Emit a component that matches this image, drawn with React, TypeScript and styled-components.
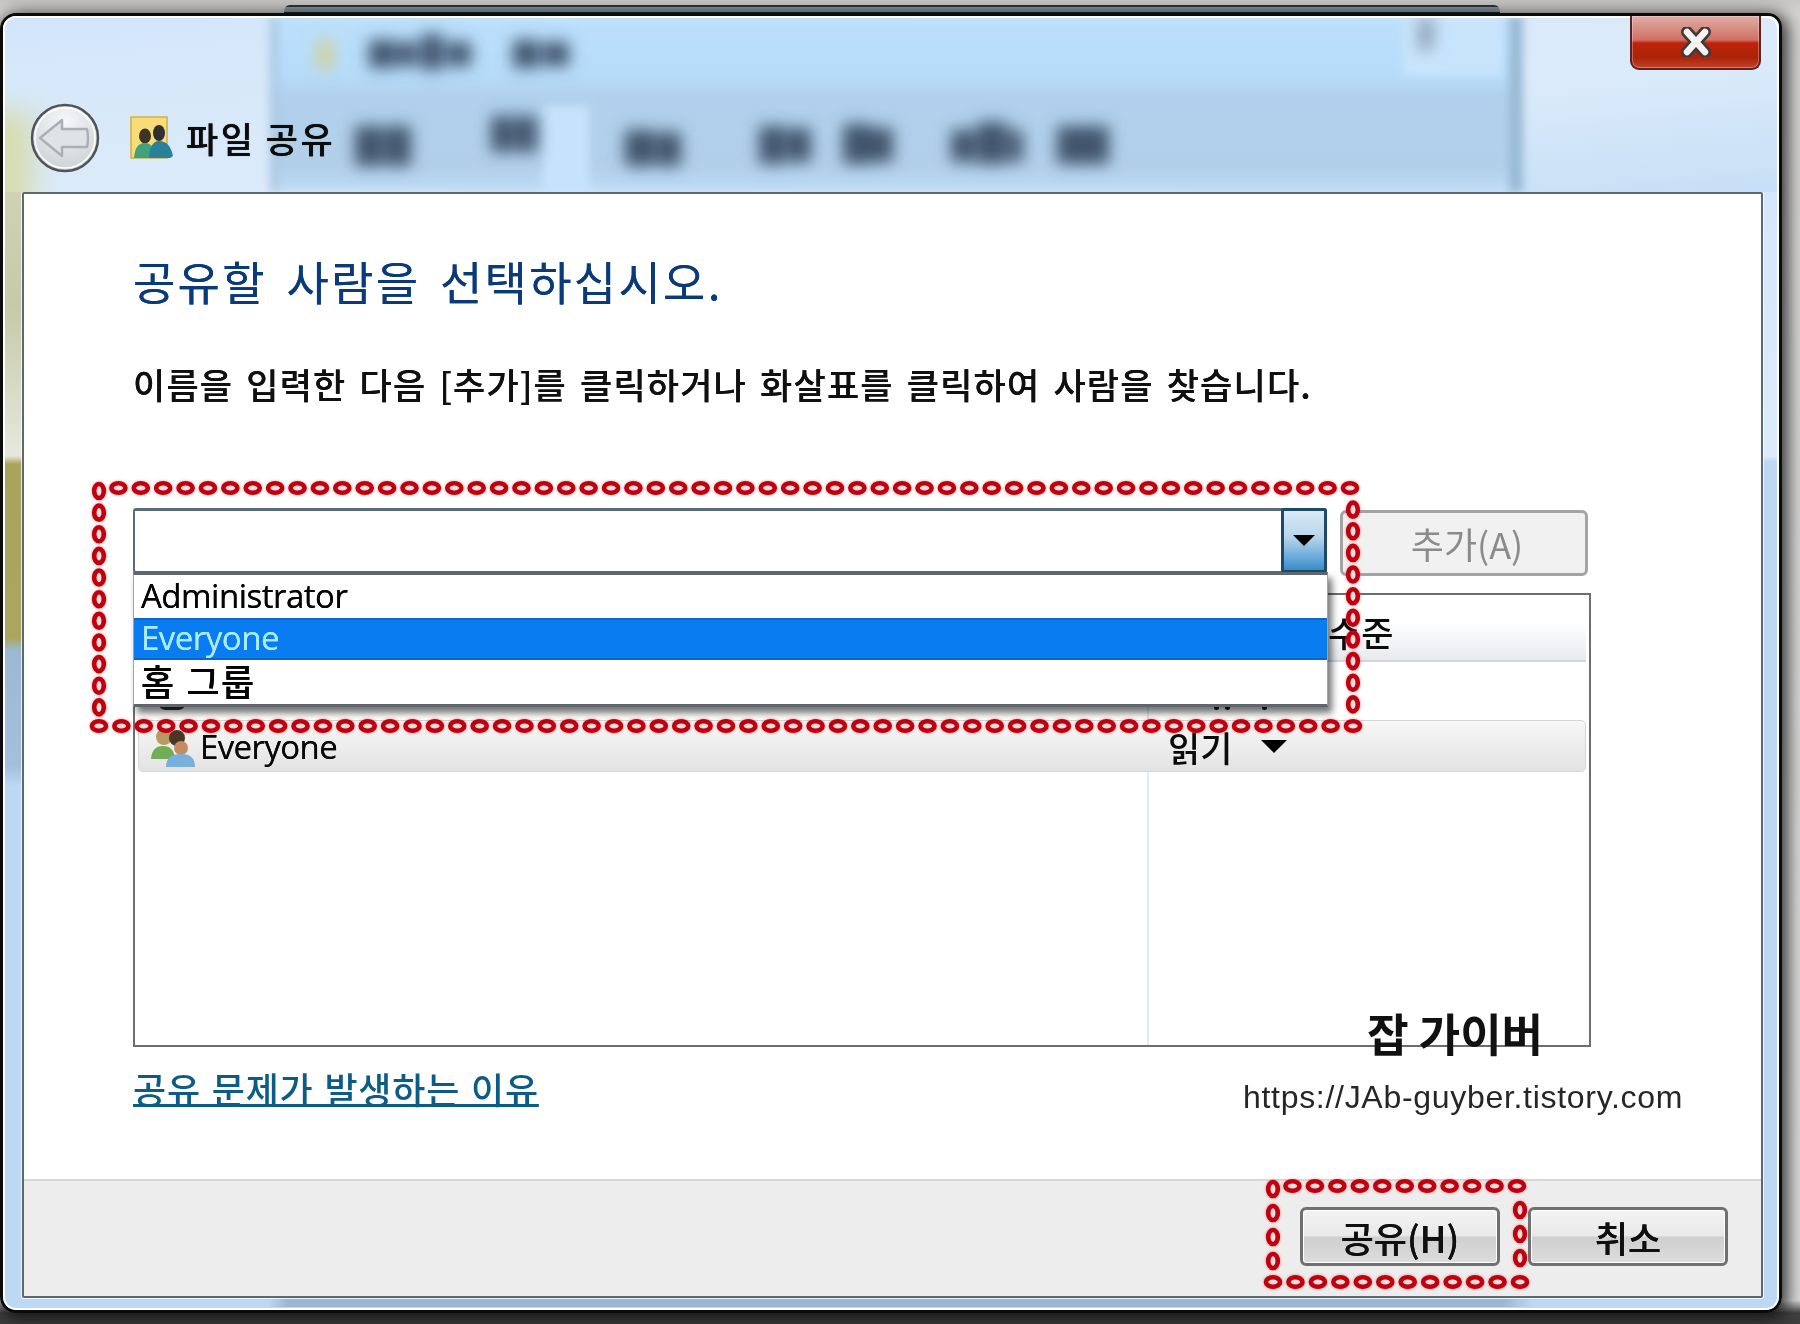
import React from "react";
import styled, { createGlobalStyle } from "styled-components";

const GlobalStyle = createGlobalStyle`
    html, body {
        margin: 0;
        padding: 0;
        background: #e4e3e2;
    }
    body {
        font-family: "Noto Sans CJK KR", "Noto Sans", sans-serif;
    }
`;

const LATIN = `"Open Sans", "Noto Sans CJK KR", sans-serif`;

// smudges of the text in the window behind the frosted glass: x, y, width, height
const backdropText: number[][] = [
    [366, 24, 26, 28], [394, 26, 20, 24], [418, 18, 22, 36], [444, 26, 24, 24],
    [510, 24, 26, 28], [540, 26, 26, 24],
    [352, 110, 28, 40], [382, 110, 26, 40],
    [488, 100, 22, 36], [512, 100, 22, 36],
    [622, 114, 30, 36], [654, 116, 24, 34],
    [756, 110, 26, 38], [784, 112, 24, 34], [840, 108, 28, 40], [868, 112, 22, 34],
    [948, 114, 24, 32], [974, 106, 30, 42], [1006, 114, 14, 32], [1054, 110, 28, 38], [1082, 110, 24, 38],
];

type FrameBox = { x: number; y: number; w: number; h: number };

// the hand-drawn red beads round the two highlighted areas
const BeadFrame: React.FC<FrameBox> = ({ x, y, w, h }) => {
    const across = Math.round(w / 22.4);
    const down = Math.round(h / 22.4);
    const stepX = w / across;
    const stepY = h / down;
    return (
        <g>
            {Array.from({ length: across + 1 }, (_, i) => (
                <React.Fragment key={i}>
                    {i > 0 && <Bead cx={x + i * stepX - 3} cy={y} rx={7} ry={4.8} />}
                    <Bead cx={x + i * stepX} cy={y + h} rx={7} ry={4.8} />
                </React.Fragment>
            ))}
            {Array.from({ length: down }, (_, i) => (
                <React.Fragment key={i}>
                    <Bead cx={x} cy={y + i * stepY + 3} rx={4.8} ry={7} />
                    {i > 0 && <Bead cx={x + w} cy={y + i * stepY} rx={4.8} ry={7} />}
                </React.Fragment>
            ))}
        </g>
    );
};

const Bead = styled.ellipse`
    fill: #f4dcdc;
    stroke: #bf000e;
    stroke-width: 4.6;
`;

const App: React.FC = () => {
    return (
        <>
            <GlobalStyle />
            <Stage>
                <Window>
                    <TitleBar>
                        <Glass width="1776" height="176" viewBox="0 0 1776 176">
                            <defs>
                                <filter id="soft" x="-50%" y="-50%" width="200%" height="200%">
                                    <feGaussianBlur stdDeviation="8" />
                                </filter>
                                <filter id="softer" x="-20%" y="-50%" width="140%" height="200%">
                                    <feGaussianBlur stdDeviation="4" />
                                </filter>
                                <filter id="softest" x="-100%" y="-50%" width="300%" height="200%">
                                    <feGaussianBlur stdDeviation="14" />
                                </filter>
                                <linearGradient id="behind" x1="0" y1="0" x2="0" y2="1">
                                    <stop offset="0" stopColor="#bce0fc" />
                                    <stop offset="0.34" stopColor="#b6dcfa" />
                                    <stop offset="0.46" stopColor="#b0d0ec" />
                                    <stop offset="0.85" stopColor="#b2cfea" />
                                    <stop offset="1" stopColor="#bfdcf6" />
                                </linearGradient>
                                <linearGradient id="glassLeft" x1="0" y1="0" x2="1" y2="1">
                                    <stop offset="0" stopColor="#d3e6f9" />
                                    <stop offset="0.6" stopColor="#dcebfa" />
                                    <stop offset="1" stopColor="#c6dff6" />
                                </linearGradient>
                            </defs>
                            <rect width="1776" height="176" fill="url(#glassLeft)" />
                            <rect x="-20" y="95" width="50" height="110" fill="#d7dcb0" filter="url(#softest)" />
                            <g filter="url(#softer)">
                                <rect x="271" y="0" width="1247" height="176" fill="url(#behind)" />
                                <rect x="266" y="0" width="10" height="176" fill="#a5c3df" opacity="0.7" />
                                <rect x="1506" y="0" width="14" height="176" fill="#98b9d4" />
                                <rect x="1400" y="0" width="100" height="60" fill="#c8e4fb" />
                                <rect x="540" y="90" width="46" height="90" fill="#c7e2fb" />
                            </g>
                            <g filter="url(#soft)">
                                <rect x="316" y="24" width="12" height="30" fill="#d8cc78" />
                                <rect x="1416" y="2" width="14" height="32" fill="#8a9db2" />
                                {backdropText.map(([x, y, w, h]) => (
                                    <rect key={`${x}-${y}`} x={x} y={y} width={w} height={h} fill="#41556c" />
                                ))}
                            </g>
                        </Glass>

                        <CloseButton aria-label="닫기">
                            <svg width="32" height="30" viewBox="0 0 32 30">
                                <path d="M7 5 L25 25 M25 5 L7 25" stroke="#403a3a" strokeWidth="12" strokeLinecap="round" />
                                <path d="M7 5 L25 25 M25 5 L7 25" stroke="#f6f2f2" strokeWidth="6.5" strokeLinecap="round" />
                            </svg>
                        </CloseButton>

                        <NavRow>
                            <BackButton width="72" height="72" viewBox="0 0 72 72">
                                <defs>
                                    <radialGradient id="backFill" cx="0.5" cy="0.25" r="0.85">
                                        <stop offset="0" stopColor="#f6f8fa" />
                                        <stop offset="1" stopColor="#c6ccd2" />
                                    </radialGradient>
                                </defs>
                                <circle cx="36" cy="36" r="33" fill="url(#backFill)" stroke="#4e5458" strokeWidth="2.5" />
                                <circle cx="36" cy="36" r="30" fill="none" stroke="#ffffff" strokeWidth="1.5" />
                                <path
                                    d="M11 36 L33 18 L33 27 L58 27 Q60 36 58 45 L33 45 L33 54 Z"
                                    fill="#dfe3e7"
                                    stroke="#aab0b6"
                                    strokeWidth="2.5"
                                    strokeLinejoin="round"
                                />
                            </BackButton>
                            <ShareIcon width="44" height="44" viewBox="0 0 44 44">
                                <rect x="1" y="1" width="36" height="41" fill="#f8dc78" stroke="#cdb04a" strokeWidth="1.5" />
                                <ellipse cx="15" cy="20" rx="6" ry="7.5" fill="#3d3526" />
                                <path d="M4 42 Q5 27 15 27 Q24 27 26 42 Z" fill="#3fa27c" />
                                <ellipse cx="29" cy="17" rx="6" ry="8" fill="#2f3030" />
                                <path d="M19 42 Q20 25 29 25 Q40 25 43 40 L40 42 Z" fill="#2a8098" />
                            </ShareIcon>
                            <WindowTitle>파일 공유</WindowTitle>
                        </NavRow>
                    </TitleBar>

                    <Pane>
                        <Body>
                            <Heading>공유할 사람을 선택하십시오.</Heading>
                            <Description>
                                이름을 입력한 다음 [추가]를 클릭하거나 화살표를 클릭하여 사람을 찾습니다.
                            </Description>

                            <PickerRow>
                                <Combo>
                                    <ComboField />
                                    <ComboArrow>
                                        <ArrowDown $size={11} />
                                    </ComboArrow>
                                    <DropList>
                                        <DropItem>Administrator</DropItem>
                                        <DropItem $selected>Everyone</DropItem>
                                        <DropItem $korean>홈 그룹</DropItem>
                                    </DropList>
                                </Combo>
                                <AddButton>추가(A)</AddButton>
                            </PickerRow>

                            <PeopleList>
                                <ListHeader>수준</ListHeader>
                                <CoveredRow>
                                    <CoveredIcon />
                                    <CoveredDots>
                                        <i />
                                        <i />
                                        <i />
                                    </CoveredDots>
                                </CoveredRow>
                                <PersonRow>
                                    <PersonName>
                                        <svg width="46" height="40" viewBox="0 0 46 40">
                                            <circle cx="14" cy="10" r="8" fill="#b99a62" />
                                            <circle cx="27" cy="11" r="8" fill="#4a3626" />
                                            <path d="M1 32 Q2 19 13 19 Q24 19 25 32 Z" fill="#72ad55" />
                                            <circle cx="31" cy="21" r="7" fill="#c48c60" />
                                            <path d="M16 40 Q16 27 31 27 Q45 27 45 40 Z" fill="#79afdc" />
                                        </svg>
                                        Everyone
                                    </PersonName>
                                    <PersonLevel>
                                        읽기
                                        <ArrowDown $size={13} />
                                    </PersonLevel>
                                </PersonRow>
                            </PeopleList>

                            <HelpLink>공유 문제가 발생하는 이유</HelpLink>

                            <Watermark>
                                <strong>잡 가이버</strong>
                                <span>https://JAb-guyber.tistory.com</span>
                            </Watermark>
                        </Body>

                        <Footer>
                            <FooterButton>공유(H)</FooterButton>
                            <FooterButton>취소</FooterButton>
                        </Footer>
                    </Pane>
                </Window>

                <Annotations width="1800" height="1324" viewBox="0 0 1800 1324">
                    <BeadFrame x={99} y={488} w={1254} h={238} />
                    <BeadFrame x={1273} y={1186} w={247} h={96} />
                </Annotations>
            </Stage>
        </>
    );
};

export default App;

const Stage = styled.div`
    position: relative;
    width: 1800px;
    height: 1324px;
    overflow: hidden;
    padding-top: 13px;
    box-sizing: border-box;
    background: linear-gradient(to bottom, #c9c7c5 0, #d6d5d4 13px, #dcdcdc 1300px, #3f3f3f 1313px);
    filter: blur(0.7px);

    /* the window behind this one pokes out above the frame */
    &::before {
        content: "";
        position: absolute;
        left: 284px;
        top: 5px;
        width: 1216px;
        height: 8px;
        background: linear-gradient(to bottom, #2e3438 0 2px, #8b9aa3 2px 7px, #20272b 7px);
        border-radius: 6px 6px 0 0;
    }
`;

const Window = styled.div`
    position: relative;
    box-sizing: border-box;
    width: 1782px;
    height: 1300px;
    border: 3px solid #0b0b0b;
    border-radius: 16px 14px 16px 16px;
    overflow: hidden;
    display: flex;
    flex-direction: column;
    padding: 0 16px 12px 19px;
    box-shadow: 3px 3px 17px 2px rgba(10, 10, 10, 0.85);
    background:
        linear-gradient(
                to bottom,
                #cfd3b4 176px,
                #c6caa8 290px,
                #e6e8dc 440px,
                #a8a45c 448px,
                #aaa660 622px,
                #9db8d2 634px,
                #a3bfdc 750px,
                #bcd8f3 770px
            )
            no-repeat left 0 top 0 / 22px 100%,
        linear-gradient(to right, transparent 265px, #9bb7d3 285px, #9bb7d3 1500px, transparent 1530px)
            no-repeat left 0 bottom 3px / 100% 9px,
        linear-gradient(to bottom, #cfe4fa 0, #dcebf9 440px, #bcd8f3 446px, #bcd8f3 100%);

    &::after {
        content: "";
        position: absolute;
        inset: 0;
        border: 2px solid #ffffff;
        border-radius: 13px;
        pointer-events: none;
    }
`;

const TitleBar = styled.div`
    position: relative;
    height: 176px;
    flex: none;
    margin: 0 -16px 0 -19px;
    padding: 86px 0 0 26px;
    box-sizing: border-box;
`;

const Glass = styled.svg`
    position: absolute;
    left: 0;
    top: 0;
`;

const CloseButton = styled.button`
    position: absolute;
    top: 0;
    right: 18px;
    width: 131px;
    height: 54px;
    padding: 0;
    z-index: 3;
    display: flex;
    align-items: center;
    justify-content: center;
    border: 2px solid #5b2420;
    border-top: 0;
    border-radius: 0 0 9px 9px;
    background: linear-gradient(to bottom, #e0aea6 0, #d07064 46%, #c0220a 52%, #aa2408 80%, #c4412a 100%);
    box-shadow: inset 0 0 0 1px rgba(255, 255, 255, 0.3);
`;

const NavRow = styled.div`
    position: relative;
    display: flex;
    align-items: center;
`;

const BackButton = styled.svg`
    flex: none;
`;

const ShareIcon = styled.svg`
    flex: none;
    margin-left: 29px;
`;

const WindowTitle = styled.div`
    margin-left: 12px;
    font-size: 35px;
    font-weight: 500;
    line-height: 44px;
    letter-spacing: 2.5px;
    color: #0c0c0c;
    text-shadow: 0 0 0.7px #0c0c0c;
`;

const Pane = styled.div`
    flex: 1;
    min-height: 0;
    display: flex;
    flex-direction: column;
    background: #ffffff;
    border: 2px solid #5e6872;
    border-radius: 2px;
    box-shadow: 0 0 0 1px rgba(255, 255, 255, 0.75);
`;

const Body = styled.div`
    position: relative;
    flex: 1;
    min-height: 0;
    box-sizing: border-box;
    padding: 56px 0 0 109px;
`;

const Heading = styled.h1`
    margin: 0;
    font-size: 46px;
    font-weight: 400;
    line-height: 60px;
    letter-spacing: 2.3px;
    word-spacing: 7px;
    color: #0a3a7a;
    text-shadow: 0 0 0.5px #0a3a7a;
`;

const Description = styled.p`
    margin: 49px 0 0;
    font-size: 35px;
    font-weight: 500;
    line-height: 50px;
    letter-spacing: 1.2px;
    word-spacing: 4px;
    color: #101010;
    text-shadow: 0 0 0.5px #101010;
`;

const PickerRow = styled.div`
    display: flex;
    gap: 13px;
    margin-top: 99px;
    height: 68px;
`;

const Combo = styled.div`
    position: relative;
    display: flex;
    width: 1194px;
    height: 65px;
    box-sizing: border-box;
    border: 2px solid #5a6c76;
    border-top-width: 3px;
    border-radius: 3px;
    background: #ffffff;
    z-index: 2;
`;

const ComboField = styled.div`
    flex: 1;
`;

const ComboArrow = styled.div`
    flex: none;
    width: 46px;
    margin: -3px -2px -2px 0;
    box-sizing: border-box;
    border: 3px solid #1d4a68;
    border-radius: 3px;
    display: flex;
    align-items: center;
    justify-content: center;
    background: linear-gradient(to bottom, #dceaf5 0, #b6d5ec 45%, #5aa2d6 85%, #3c8cc6 100%);
`;

const ArrowDown = styled.i<{ $size: number }>`
    display: block;
    width: 0;
    height: 0;
    border-left: ${({ $size }) => $size}px solid transparent;
    border-right: ${({ $size }) => $size}px solid transparent;
    border-top: ${({ $size }) => $size}px solid #000000;
`;

const DropList = styled.div`
    position: absolute;
    left: -2px;
    right: -3px;
    top: 61px;
    box-sizing: border-box;
    height: 135px;
    padding-top: 1px;
    background: #ffffff;
    border: 1px solid #9aa5ac;
    border-top: 3px solid #5f676c;
    border-bottom: 3px solid #5f676c;
    box-shadow: 4px 6px 7px rgba(0, 0, 0, 0.55);
`;

const DropItem = styled.div<{ $selected?: boolean; $korean?: boolean }>`
    height: 42px;
    padding-left: 7px;
    font-family: ${LATIN};
    font-size: ${({ $korean }) => ($korean ? "36px" : "33px")};
    font-weight: ${({ $korean }) => ($korean ? 500 : 400)};
    line-height: ${({ $korean }) => ($korean ? "46px" : "40px")};
    letter-spacing: ${({ $korean }) => ($korean ? "1.5px" : "-0.5px")};
    color: ${({ $selected }) => ($selected ? "#a9ecff" : "#050505")};
    background: ${({ $selected }) => ($selected ? "#0a7cf2" : "transparent")};
    box-shadow: ${({ $selected }) => ($selected ? "inset 0 2px 0 #0e68c0, inset 0 -2px 0 #0e68c0" : "none")};
    text-shadow: 0 0 0.6px currentColor;
`;

const AddButton = styled.div`
    width: 248px;
    height: 66px;
    box-sizing: border-box;
    margin-top: 2px;
    border: 3px solid #a4a4a4;
    border-radius: 6px;
    background: #f1f1f1;
    display: flex;
    align-items: center;
    justify-content: center;
    padding-left: 6px;
    font-size: 36px;
    color: #8b8b8b;
`;

const PeopleList = styled.div`
    width: 1458px;
    height: 454px;
    margin-top: 17px;
    box-sizing: border-box;
    padding: 27px 3px 0;
    border: 2px solid #6d6d6d;
    background: #ffffff linear-gradient(#dfecf1, #dfecf1) no-repeat 1012px 0 / 2px 100%;
`;

const ListHeader = styled.div`
    height: 40px;
    box-sizing: border-box;
    padding-left: 1190px;
    font-size: 35px;
    font-weight: 500;
    line-height: 20px;
    letter-spacing: 1px;
    color: #0c0c0c;
    background: linear-gradient(to bottom, #ffffff, #e7eaed);
    border-bottom: 2px solid #d2d6d9;
`;

const CoveredRow = styled.div`
    position: relative;
    height: 58px;
`;

const CoveredIcon = styled.i`
    position: absolute;
    left: 20px;
    bottom: 10px;
    width: 28px;
    height: 8px;
    border-radius: 0 0 14px 14px;
    background: #30383e;
`;

const CoveredDots = styled.div`
    position: absolute;
    left: 1076px;
    bottom: 10px;
    display: flex;
    gap: 6px;

    i {
        width: 5px;
        height: 5px;
        border-radius: 50%;
        background: #1a1a1a;
    }
    i:last-child {
        margin-left: 26px;
    }
`;

const PersonRow = styled.div`
    display: grid;
    grid-template-columns: 1029px 1fr;
    height: 52px;
    box-sizing: border-box;
    border: 1px solid #d4d6d8;
    border-radius: 5px;
    background: linear-gradient(to bottom, #f7f7f7, #e3e3e3);
`;

const PersonName = styled.div`
    display: flex;
    align-items: center;
    gap: 4px;
    padding: 0 0 3px 11px;
    font-family: ${LATIN};
    font-size: 33px;
    letter-spacing: -0.6px;
    color: #0a0a0a;
    text-shadow: 0 0 0.6px #0a0a0a;

    svg {
        flex: none;
    }
`;

const PersonLevel = styled.div`
    display: flex;
    align-items: center;
    gap: 29px;
    padding-bottom: 3px;
    font-size: 35px;
    font-weight: 500;
    color: #0a0a0a;
`;

const HelpLink = styled.a`
    display: inline-block;
    margin-top: 19px;
    font-size: 36px;
    font-weight: 500;
    line-height: 44px;
    letter-spacing: 0.8px;
    word-spacing: 2px;
    color: #0d5c86;
    text-decoration: underline;
    text-decoration-thickness: 3px;
    text-underline-offset: 0;
`;

// sits across the bottom border of the list
const Watermark = styled.div`
    position: absolute;
    left: 1219px;
    top: 813px;
    display: flex;
    flex-direction: column;
    align-items: center;

    strong {
        margin-right: 16px;
        font-size: 45px;
        line-height: 52px;
        font-weight: 700;
        color: #111111;
    }
    span {
        margin-top: 18px;
        font-family: "Liberation Sans", sans-serif;
        font-size: 32px;
        line-height: 40px;
        letter-spacing: 0.7px;
        color: #262626;
    }
`;

const Footer = styled.div`
    flex: none;
    height: 117px;
    box-sizing: border-box;
    display: flex;
    justify-content: flex-end;
    gap: 28px;
    padding: 26px 33px 0 0;
    background: #ededed;
    border-top: 2px solid #d8d8d8;
`;

const FooterButton = styled.div`
    width: 200px;
    height: 59px;
    box-sizing: border-box;
    border: 3px solid #707070;
    border-radius: 6px;
    display: flex;
    align-items: center;
    justify-content: center;
    font-size: 36px;
    font-weight: 500;
    color: #101010;
    text-shadow: 0 0 0.6px #101010;
    background: linear-gradient(to bottom, #f3f3f3 0, #e9e9e9 48%, #cfcfcf 52%, #dddddd 100%);
    box-shadow: inset 0 0 0 1px #ffffff;
`;

const Annotations = styled.svg`
    position: absolute;
    left: 0;
    top: 0;
    pointer-events: none;
    filter: drop-shadow(0 0 1.5px rgba(230, 60, 60, 0.6));
`;
